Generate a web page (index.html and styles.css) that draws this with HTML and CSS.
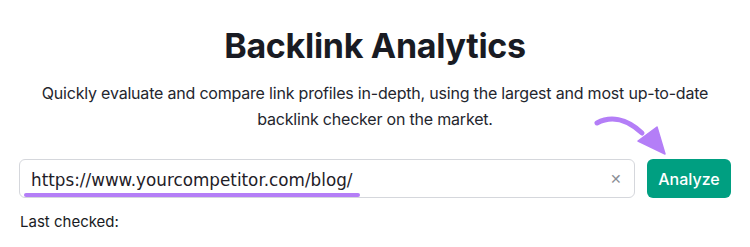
FILE: index.html
```html
<!DOCTYPE html>
<html>
<head>
  <meta charset="utf-8">
  <meta name="viewport" content="width=device-width">
  <title>Backlink Analytics</title>
  <link rel="stylesheet" href="styles.css">
</head>
<body>
  <div class="page">
    <h1 class="title">Backlink Analytics</h1>
    <p class="lead">
      Quickly evaluate and compare link profiles in-depth, using the largest and most up-to-date<br>
      backlink checker on the market.
    </p>

    <div class="search">
      <div class="field">
        <span class="url">https://www.yourcompetitor.com/blog/</span>
        <span class="clear">&#x2715;</span>
      </div>
      <button class="analyze">Analyze</button>
      <!-- hand drawn pointer over the button -->
      <svg class="pointer" width="80" height="50" viewBox="0 0 80 50">
        <path d="M7 12 C 20 5, 36 7, 52 22" fill="none" stroke="#b47ef7" stroke-width="5" stroke-linecap="round"/>
        <path d="M48 30 L67 16 L75 43 Z" fill="#b47ef7" stroke="#b47ef7" stroke-width="1.5" stroke-linejoin="round"/>
      </svg>
    </div>

    <p class="checked">Last checked:</p>
  </div>
</body>
</html>
```

FILE: styles.css
```css
body {
  margin: 0;
  background: #fff;
  color: #191b23;
  font-family: Inter, "Noto Sans", sans-serif;
}

.page {
  width: 750px;
  padding-top: 24px;
}

.title {
  margin: 0;
  text-align: center;
  font-size: 34px;
  line-height: 44px;
  font-weight: 700;
  letter-spacing: -0.3px;
}

.lead {
  margin: 12px 0 0;
  text-align: center;
  font-size: 16px;
  line-height: 26px;
  letter-spacing: -0.2px;
  color: #24262e;
}

.search {
  position: relative;
  display: flex;
  gap: 12px;
  margin: 27px 0 0 19px;
  width: 712px;
}

.field {
  flex: 1;
  display: flex;
  align-items: center;
  height: 39px;
  box-sizing: border-box;
  padding: 0 12px 0 11px;
  border: 1px solid #d5d7dc;
  border-radius: 6px;
}

.url {
  position: relative;
  margin-right: auto;
  padding-top: 3px;
  font-family: "DejaVu Sans", sans-serif;
  font-size: 16.8px;
  color: #1e2027;
}

.url::after {
  content: "";
  position: absolute;
  left: -7px;
  right: -8px;
  bottom: -7px;
  height: 4px;
  border-radius: 2px;
  background: #b47ef7;
}

.clear {
  color: #8b8e96;
  font-size: 14px;
}

.analyze {
  width: 84px;
  height: 39px;
  border: 0;
  border-radius: 6px;
  background: #009f81;
  color: #fff;
  font-family: Inter, sans-serif;
  font-size: 16px;
  font-weight: 500;
}

.pointer {
  position: absolute;
  left: 571px;
  top: -48px;
}

.checked {
  margin: 14px 0 0 20px;
  font-size: 15px;
  color: #191b23;
}
```
